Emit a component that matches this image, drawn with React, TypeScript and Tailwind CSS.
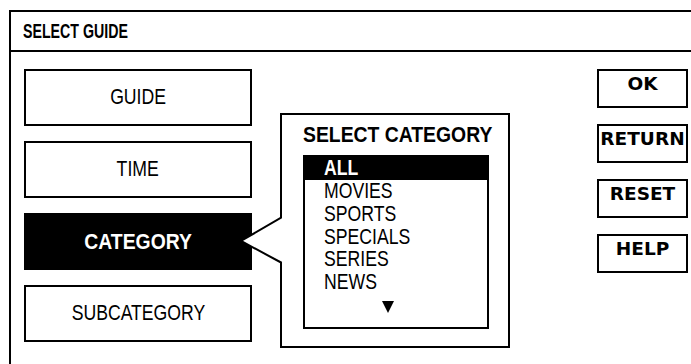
import React from 'react';

const menuItems = ['GUIDE', 'TIME', 'CATEGORY', 'SUBCATEGORY'];
const categories = ['ALL', 'MOVIES', 'SPORTS', 'SPECIALS', 'SERIES', 'NEWS'];
const actions = ['OK', 'RETURN', 'RESET', 'HELP'];

// condensed look: Liberation Sans squeezed horizontally
function Narrow({ children, className = '' }: { children: React.ReactNode; className?: string }) {
  return <span className={`inline-block whitespace-nowrap ${className}`}>{children}</span>;
}

function MenuButton({ label, active }: { label: string; active?: boolean }) {
  return (
    <div
      className={
        active
          ? 'flex h-[57px] items-center justify-center border-2 border-black bg-black text-[22px] font-bold text-white'
          : 'flex h-[57px] items-center justify-center border-2 border-black bg-white text-[21.5px] text-black'
      }
    >
      <Narrow className={active ? 'scale-x-[0.88]' : 'scale-x-[0.82]'}>{label}</Narrow>
    </div>
  );
}

function CategoryPopup() {
  return (
    <div className="relative mt-[44px] ml-[28px] h-[235px] w-[230px] shrink-0 border-2 border-black bg-white px-[21px] pt-[9px]">
      <svg className="absolute left-[-42px] top-[98px]" width="42" height="54" viewBox="0 0 42 54">
        <polygon points="42,4 1,28 42,50" fill="white" />
        <polyline points="42,4 1,28 42,50" fill="none" stroke="black" strokeWidth="2" />
      </svg>
      <div className="text-[22px] font-bold leading-none whitespace-nowrap">
        <Narrow className="origin-left scale-x-[0.88]">SELECT CATEGORY</Narrow>
      </div>
      <div className="mt-[9px] h-[174px] w-[186px] border-2 border-black text-[21.5px] leading-[22.75px]">
        {categories.map((c, i) => (
          <div
            key={c}
            className={i === 0 ? 'h-[23px] bg-black pl-[19px] font-bold text-white' : 'pl-[19px]'}
          >
            <Narrow className="origin-left scale-x-[0.82]">{c}</Narrow>
          </div>
        ))}
        <div className="pl-[77px] pt-[7px] leading-none">
          <svg width="12" height="12" viewBox="0 0 12 12">
            <polygon points="0,0 12,0 6,12" fill="black" />
          </svg>
        </div>
      </div>
    </div>
  );
}

export default function App() {
  return (
    <div className="relative h-[364px] w-[691px] overflow-hidden bg-white pt-[10px] pl-[9px] font-['Liberation_Sans',Arial,sans-serif] text-black">
      <div className="h-[360px] w-[720px] border-t-2 border-r-0 border-l-2 border-black">
        <div className="flex h-[40px] items-center border-b-2 border-black pl-[12px] text-[20px] font-bold">
          <Narrow className="origin-left scale-x-[0.71]">SELECT GUIDE</Narrow>
        </div>
        <div className="flex pt-[17px] pl-[13px]">
          <div className="flex w-[228px] shrink-0 flex-col gap-[15px]">
            {menuItems.map((m) => (
              <MenuButton key={m} label={m} active={m === 'CATEGORY'} />
            ))}
          </div>
          <CategoryPopup />
          <div className="ml-[87px] flex w-[91px] shrink-0 flex-col gap-[16px]">
            {actions.map((a) => (
              <div
                key={a}
                className="h-[39px] border-2 border-black pt-[4px] text-center font-['DejaVu_Sans',sans-serif] text-[18.5px] font-bold leading-none"
              >
                {a}
              </div>
            ))}
          </div>
        </div>
      </div>
    </div>
  );
}
